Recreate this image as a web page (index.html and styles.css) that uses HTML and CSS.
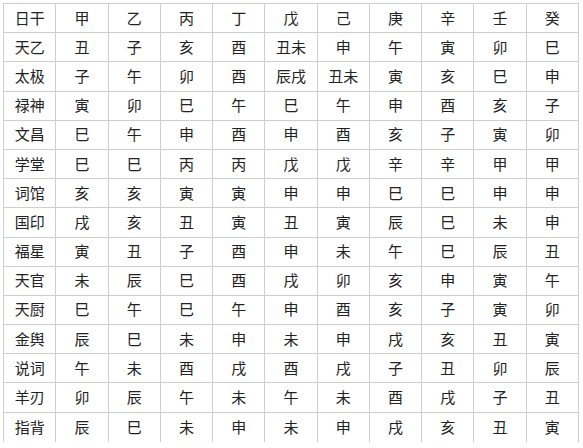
FILE: index.html
```html
<!DOCTYPE html>
<html lang="zh-CN">
<head>
<meta charset="utf-8">
<title>神煞表</title>
<link rel="stylesheet" href="styles.css">
</head>
<body>
<div class="grid">
<div class="c">日干</div><div class="c">甲</div><div class="c">乙</div><div class="c">丙</div><div class="c">丁</div><div class="c">戊</div><div class="c">己</div><div class="c">庚</div><div class="c">辛</div><div class="c">壬</div><div class="c">癸</div>
<div class="c">天乙</div><div class="c">丑</div><div class="c">子</div><div class="c">亥</div><div class="c">酉</div><div class="c">丑未</div><div class="c">申</div><div class="c">午</div><div class="c">寅</div><div class="c">卯</div><div class="c">巳</div>
<div class="c">太极</div><div class="c">子</div><div class="c">午</div><div class="c">卯</div><div class="c">酉</div><div class="c">辰戌</div><div class="c">丑未</div><div class="c">寅</div><div class="c">亥</div><div class="c">巳</div><div class="c">申</div>
<div class="c">禄神</div><div class="c">寅</div><div class="c">卯</div><div class="c">巳</div><div class="c">午</div><div class="c">巳</div><div class="c">午</div><div class="c">申</div><div class="c">酉</div><div class="c">亥</div><div class="c">子</div>
<div class="c">文昌</div><div class="c">巳</div><div class="c">午</div><div class="c">申</div><div class="c">酉</div><div class="c">申</div><div class="c">酉</div><div class="c">亥</div><div class="c">子</div><div class="c">寅</div><div class="c">卯</div>
<div class="c">学堂</div><div class="c">巳</div><div class="c">巳</div><div class="c">丙</div><div class="c">丙</div><div class="c">戊</div><div class="c">戊</div><div class="c">辛</div><div class="c">辛</div><div class="c">甲</div><div class="c">甲</div>
<div class="c">词馆</div><div class="c">亥</div><div class="c">亥</div><div class="c">寅</div><div class="c">寅</div><div class="c">申</div><div class="c">申</div><div class="c">巳</div><div class="c">巳</div><div class="c">申</div><div class="c">申</div>
<div class="c">国印</div><div class="c">戌</div><div class="c">亥</div><div class="c">丑</div><div class="c">寅</div><div class="c">丑</div><div class="c">寅</div><div class="c">辰</div><div class="c">巳</div><div class="c">未</div><div class="c">申</div>
<div class="c">福星</div><div class="c">寅</div><div class="c">丑</div><div class="c">子</div><div class="c">酉</div><div class="c">申</div><div class="c">未</div><div class="c">午</div><div class="c">巳</div><div class="c">辰</div><div class="c">丑</div>
<div class="c">天官</div><div class="c">未</div><div class="c">辰</div><div class="c">巳</div><div class="c">酉</div><div class="c">戌</div><div class="c">卯</div><div class="c">亥</div><div class="c">申</div><div class="c">寅</div><div class="c">午</div>
<div class="c">天厨</div><div class="c">巳</div><div class="c">午</div><div class="c">巳</div><div class="c">午</div><div class="c">申</div><div class="c">酉</div><div class="c">亥</div><div class="c">子</div><div class="c">寅</div><div class="c">卯</div>
<div class="c">金舆</div><div class="c">辰</div><div class="c">巳</div><div class="c">未</div><div class="c">申</div><div class="c">未</div><div class="c">申</div><div class="c">戌</div><div class="c">亥</div><div class="c">丑</div><div class="c">寅</div>
<div class="c">说词</div><div class="c">午</div><div class="c">未</div><div class="c">酉</div><div class="c">戌</div><div class="c">酉</div><div class="c">戌</div><div class="c">子</div><div class="c">丑</div><div class="c">卯</div><div class="c">辰</div>
<div class="c">羊刃</div><div class="c">卯</div><div class="c">辰</div><div class="c">午</div><div class="c">未</div><div class="c">午</div><div class="c">未</div><div class="c">酉</div><div class="c">戌</div><div class="c">子</div><div class="c">丑</div>
<div class="c last">指背</div><div class="c last">辰</div><div class="c last">巳</div><div class="c last">未</div><div class="c last">申</div><div class="c last">未</div><div class="c last">申</div><div class="c last">戌</div><div class="c last">亥</div><div class="c last">丑</div><div class="c last">寅</div>
</div>
</body>
</html>
```

FILE: styles.css
```css
html, body {
  margin: 0;
  padding: 0;
  background: #ffffff;
}

.grid {
  margin: 3px 0 0 3px;
  width: 576px;
  box-sizing: border-box;
  display: grid;
  grid-template-columns: repeat(11, 1fr);
  grid-auto-rows: 29.2px;
  border-left: 1px solid #cfcfcf;
  border-top: 1px solid #cfcfcf;
  font-family: "Noto Sans CJK SC", "Noto Sans", sans-serif;
  font-size: 15px;
  color: #222222;
}

.c {
  box-sizing: border-box;
  border-right: 1px solid #cfcfcf;
  border-bottom: 1px solid #cfcfcf;
  display: flex;
  align-items: center;
  justify-content: center;
  padding-bottom: 2px;
  line-height: 1;
}

.c.last {
  border-bottom: none;
}
```
